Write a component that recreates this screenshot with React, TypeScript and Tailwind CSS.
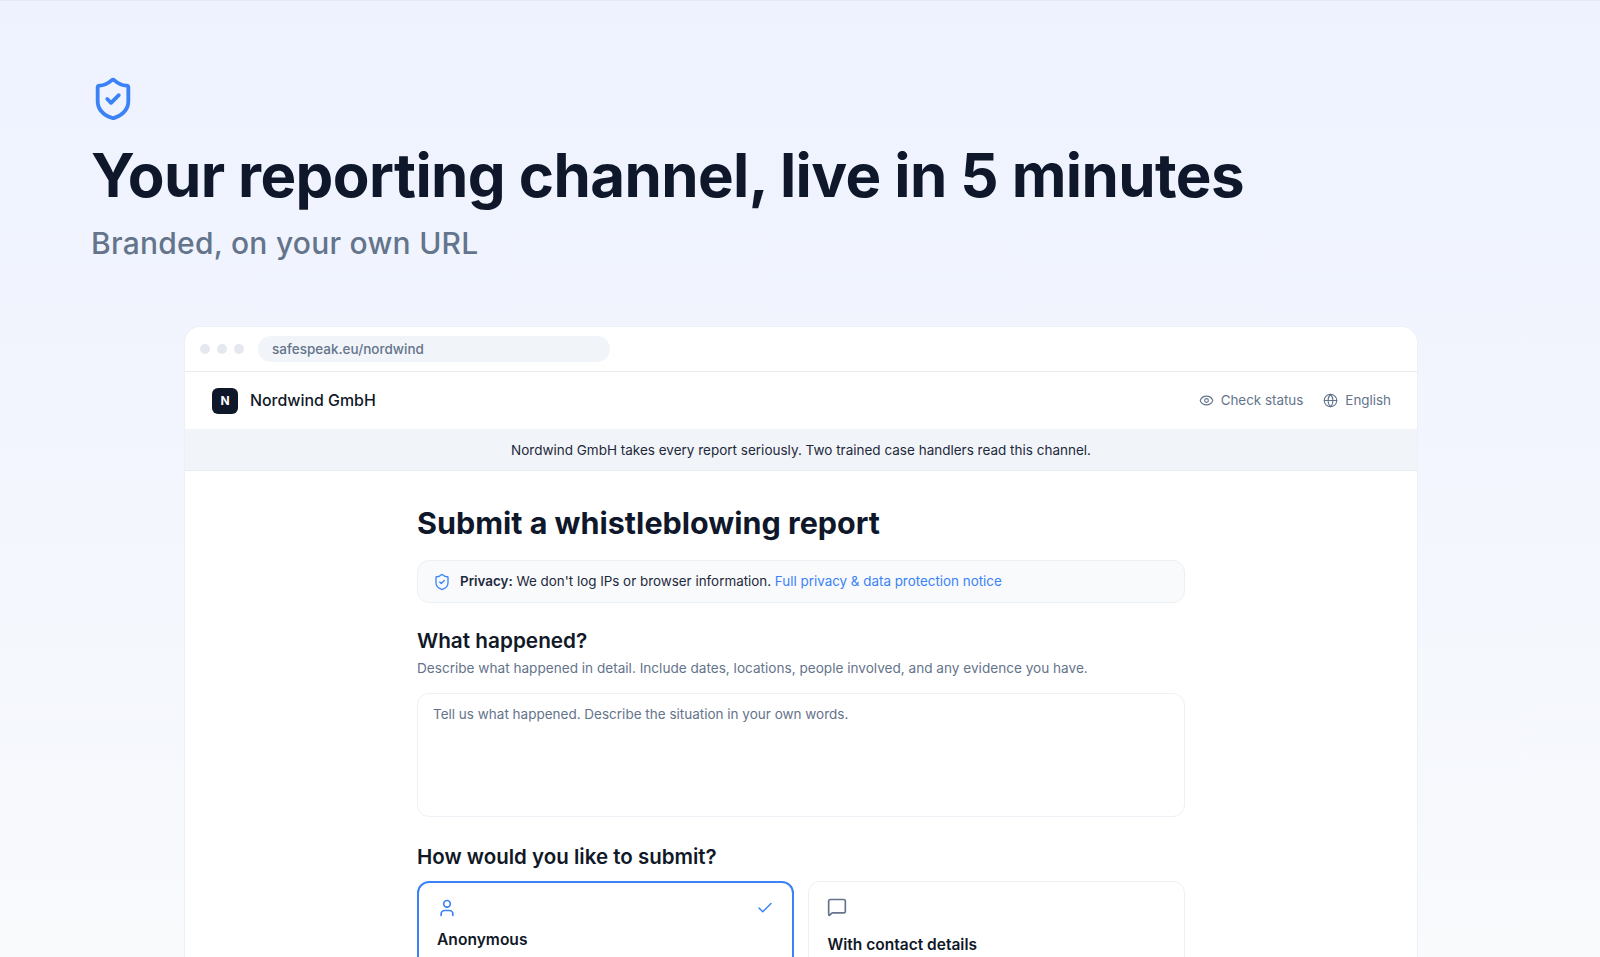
import { Check, Eye, Globe, MessageSquare, ShieldCheck, User } from "lucide-react";

const font = { fontFamily: "Inter, 'Liberation Sans', sans-serif" };

export default function App() {
  return (
    <div
      style={font}
      className="h-[957px] overflow-hidden border-t border-[#e6e9f2] bg-gradient-to-b from-[#eef2ff] to-[#f8fafc]"
    >
      <div className="pl-[91px] pt-[75px]">
        <ShieldCheck className="-ml-[1px] h-[46px] w-[46px] text-[#3b82f6]" strokeWidth={2} />
        <h1 className="mt-[17px] text-[60px] font-bold leading-[72px] tracking-[-0.6px] text-[#0f172a]">
          Your reporting channel, live in 5 minutes
        </h1>
        <p className="mt-[14px] text-[30px] font-medium leading-[36px] tracking-[0.25px] text-[#64748b]">
          Branded, on your own URL
        </p>
      </div>

      <div className="mx-auto mt-[65px] w-[1234px] translate-x-[1px] rounded-t-2xl border border-b-0 border-[#edf0f6] bg-white">
        <div className="flex h-[45px] items-center gap-[7px] border-b border-[#e8ebf0] px-[15px]">
          <span className="h-[10px] w-[10px] rounded-full bg-[#e5e8ee]" />
          <span className="h-[10px] w-[10px] rounded-full bg-[#e5e8ee]" />
          <span className="h-[10px] w-[10px] rounded-full bg-[#e5e8ee]" />
          <div className="ml-[7px] flex h-[26px] w-[352px] items-center rounded-full bg-[#f1f5f9] px-[14px] text-[13.5px] font-medium text-[#64748b]">
            safespeak.eu/nordwind
          </div>
        </div>

        <div className="flex h-[57px] items-center justify-between pl-[27px] pr-[26px]">
          <div className="flex items-center gap-[12px]">
            <div className="flex h-[26px] w-[26px] items-center justify-center rounded-[6px] bg-[#0f172a] text-[12px] font-bold text-white">
              N
            </div>
            <span className="text-[15.9px] font-medium text-[#111827]">Nordwind GmbH</span>
          </div>
          <div className="flex items-center gap-[20px] text-[13.4px] text-[#64748b]">
            <span className="flex items-center gap-[7px]">
              <Eye className="h-[15px] w-[15px]" strokeWidth={1.75} />
              Check status
            </span>
            <span className="flex items-center gap-[7px]">
              <Globe className="h-[15px] w-[15px]" strokeWidth={1.75} />
              English
            </span>
          </div>
        </div>

        <div className="flex h-[42px] items-center justify-center border-b border-[#e9ecf1] bg-[#f1f5f9] pt-[1px] text-[13.5px] text-[#1e293b]">
          Nordwind GmbH takes every report seriously. Two trained case handlers read this channel.
        </div>

        <div className="mx-auto w-[768px] pt-[34px]">
          <h2 className="text-[30.5px] font-bold leading-[36px] text-[#0f172a]">Submit a whistleblowing report</h2>

          <div className="mt-[19px] flex h-[43px] items-center gap-[9px] rounded-xl border border-[#eceff4] bg-[#f8fafc] px-[15px] text-[13.4px] text-[#1e293b]">
            <ShieldCheck className="h-[18px] w-[18px] text-[#3b82f6]" strokeWidth={1.75} />
            <p>
              <strong className="font-semibold">Privacy:</strong> We don't log IPs or browser information.{" "}
              <a className="text-[#3b82f6]">Full privacy &amp; data protection notice</a>
            </p>
          </div>

          <h3 className="mt-[24px] text-[20.75px] font-semibold leading-[28px] text-[#111827]">What happened?</h3>
          <p className="mt-[3px] text-[13.6px] leading-[20px] text-[#64748b]">
            Describe what happened in detail. Include dates, locations, people involved, and any evidence you have.
          </p>

          <div className="mt-[15px] h-[124px] rounded-xl border border-[#edf0f4] px-[15px] py-[10px] text-[13.5px] leading-[20px] text-[#64748b]">
            Tell us what happened. Describe the situation in your own words.
          </div>

          <h3 className="mt-[26px] text-[20.5px] font-semibold leading-[28px] text-[#111827]">
            How would you like to submit?
          </h3>

          <div className="mt-[10px] grid grid-cols-2 gap-[15px]">
            <div className="h-[120px] rounded-xl border-2 border-[#3b82f6] px-[18px] pt-[15px]">
              <div className="flex items-center justify-between">
                <User className="h-5 w-5 text-[#3b82f6]" strokeWidth={2} />
                <Check className="h-[18px] w-[18px] text-[#3b82f6]" strokeWidth={2} />
              </div>
              <p className="mt-[10px] text-[15.6px] font-semibold leading-[24px] text-[#111827]">Anonymous</p>
            </div>
            <div className="-ml-[1px] h-[120px] rounded-xl border border-[#edf0f4] pl-[19px] pr-[18px] pt-[15px]">
              <MessageSquare className="-ml-[1px] h-5 w-5 text-[#64748b]" strokeWidth={2} />
              <p className="mt-[16px] text-[15.5px] font-semibold leading-[24px] text-[#111827]">With contact details</p>
            </div>
          </div>
        </div>
      </div>
    </div>
  );
}
